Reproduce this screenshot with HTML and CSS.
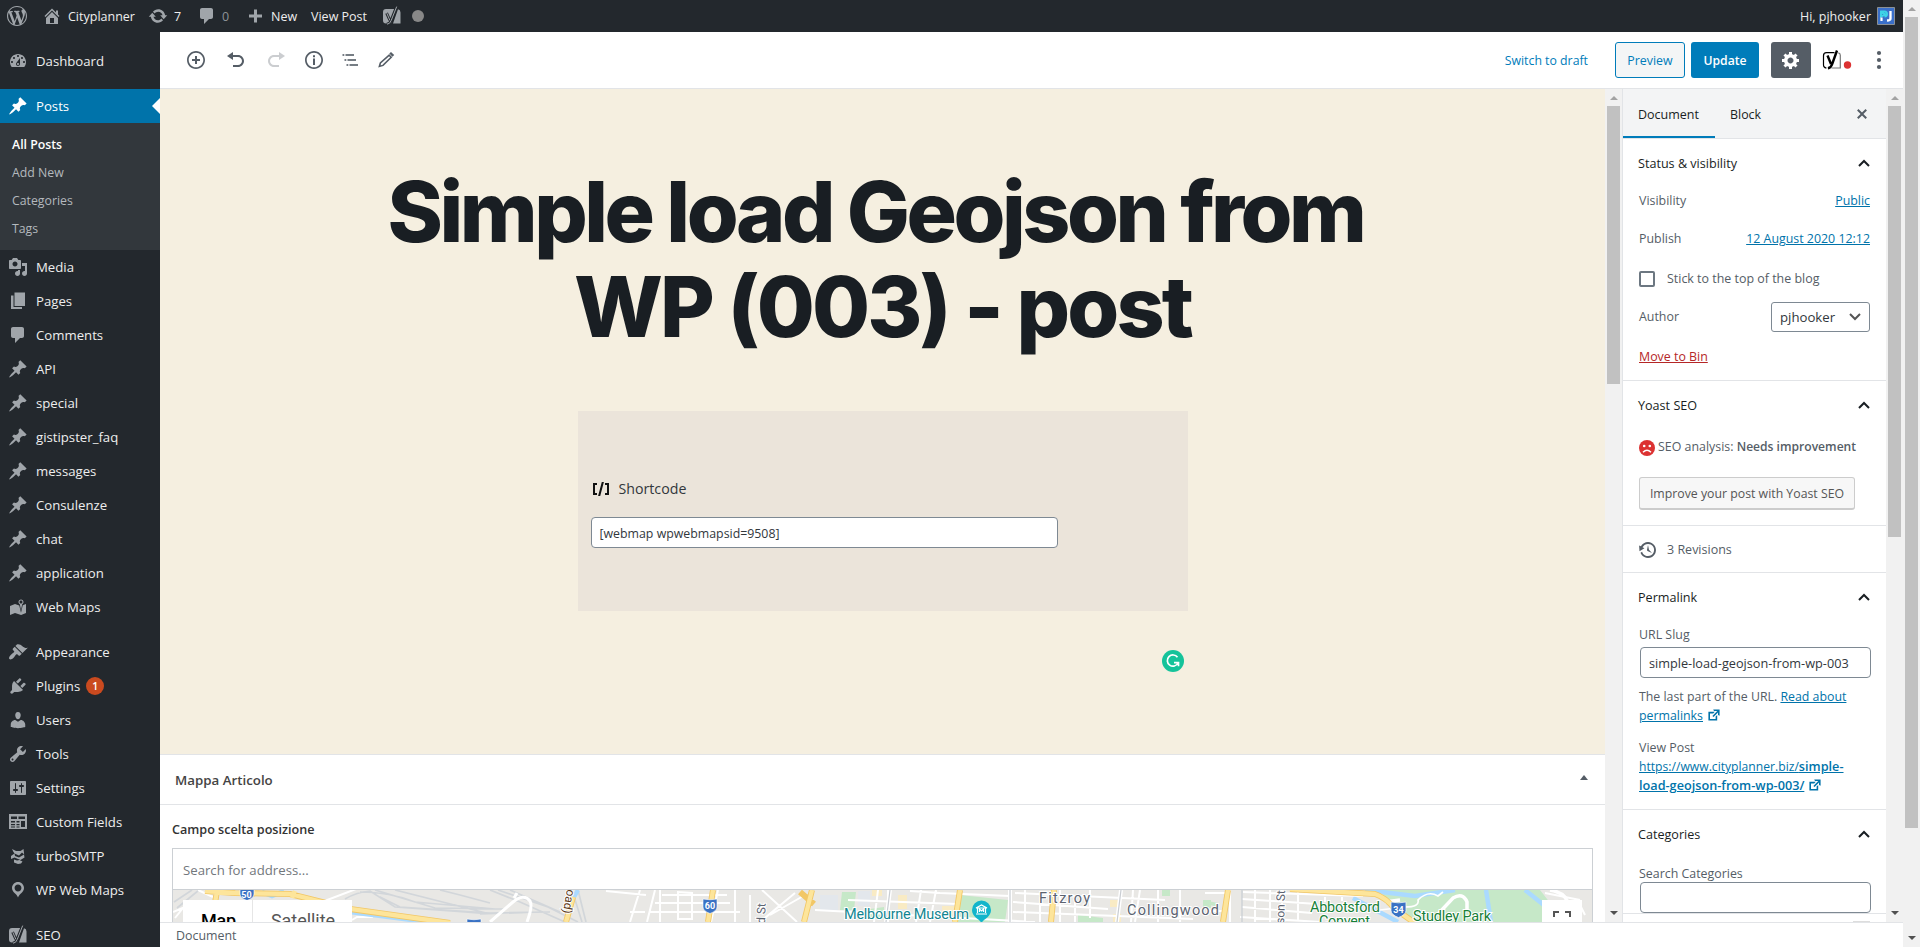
FILE: index.html
```html
<!DOCTYPE html>
<html lang="en">
<head>
<meta charset="utf-8">
<title>Edit Post - Cityplanner</title>
<link rel="stylesheet" href="styles.css">
</head>
<body>
<svg class="defs" width="0" height="0" aria-hidden="true">
  <symbol id="pin" viewBox="0 0 20 20"><path d="M10.44 3.02l1.82-1.82 6.36 6.35-1.83 1.82c-1.05-.68-2.48-.57-3.41.36l-.75.75c-.92.93-1.04 2.35-.35 3.41l-1.83 1.82-2.41-2.41-2.8 2.79c-.42.42-3.38 2.71-3.8 2.29s1.86-3.39 2.28-3.81l2.79-2.79L4.1 9.36l1.83-1.82c1.05.69 2.48.57 3.4-.36l.75-.75c.93-.92 1.05-2.35.36-3.41z"/></symbol>
  <symbol id="comment" viewBox="0 0 20 20"><path d="M5 2h9c1.1 0 2 .9 2 2v7c0 1.1-.9 2-2 2h-2l-5 5v-5H5c-1.1 0-2-.9-2-2V4c0-1.1.9-2 2-2z"/></symbol>
  <symbol id="up" viewBox="0 0 12 8"><path d="M1 7l5-5 5 5" fill="none" stroke="#191e23" stroke-width="2"/></symbol>
  <symbol id="external" viewBox="0 0 20 20"><path d="M9 3h8v8l-2-1V6.92l-5.6 5.59-1.41-1.41L14.08 5H10zm3 12v-3l2-2v7H3V6h8L9 8H5v7h7z"/></symbol>
  <symbol id="yoast" viewBox="0 0 20 20"><path d="M4 3h9.5L9 17.500H4a3 3 0 0 1-3-3V6a3 3 0 0 1 3-3zM16 3.200q2.500.6 2.500 3.300v11H11z"/><path d="M4.600 7.200l3.200 7M14.600.6L9 14.500q-1.200 3.600-4.300 3.700" fill="none" stroke="#23282d" stroke-width="2.800"/><path d="M4.800 7.200l3 7M14.700.6L9.200 14.500q-1.300 3.600-4.200 3.700" fill="none" stroke="currentColor" stroke-width="1"/></symbol>
  <symbol id="shield" viewBox="0 0 16 16"><path d="M1 1q7 1.500 14 0v8q0 4-7 6.500Q1 13 1 9z" fill="#3a72c4" stroke="#fff" stroke-width=".6"/></symbol>
</svg>

<div class="screen">
  <div class="page">
    <header class="adminbar">
      <svg class="ic wp" viewBox="0 0 20 20"><path d="M20 10c0-5.510-4.490-10-10-10C4.480 0 0 4.490 0 10c0 5.520 4.480 10 10 10 5.510 0 10-4.480 10-10zM7.780 15.370L4.370 6.220c.55-.02 1.170-.08 1.170-.08.5-.06.44-1.130-.06-1.110 0 0-1.450.11-2.370.11-.18 0-.37 0-.58-.01C4.120 2.690 6.870 1.110 10 1.110c2.330 0 4.450.87 6.050 2.340-.68-.11-1.650.39-1.650 1.580 0 .74.45 1.360.9 2.100.35.61.55 1.360.55 2.460 0 1.490-1.400 5-1.400 5l-3.030-8.370c.54-.02.82-.17.82-.17.5-.05.44-1.250-.06-1.220 0 0-1.440.12-2.380.12-.87 0-2.330-.12-2.330-.12-.5-.03-.56 1.200-.06 1.220l.92.08 1.260 3.410zM17.410 10c.24-.64.74-1.870.43-4.250.7 1.290 1.050 2.710 1.050 4.250 0 3.290-1.730 6.240-4.400 7.780.97-2.590 1.940-5.200 2.920-7.780zM6.100 18.090C3.120 16.650 1.110 13.530 1.110 10c0-1.300.23-2.480.72-3.590C3.250 10.300 4.670 14.200 6.100 18.090zm4.030-6.630l2.580 6.980c-.86.29-1.760.45-2.710.45-.79 0-1.570-.11-2.290-.33.81-2.380 1.620-4.740 2.420-7.100z"/></svg>
      <div class="bar-item city"><svg class="ic" viewBox="0 0 20 20"><path fill-rule="evenodd" d="M16 8.500l1.530 1.530-1.060 1.060L10 4.600l-6.470 6.490-1.060-1.060L10 2.500l4 4v-2h2v4zm-6-2.460l6 5.990V18H4v-5.970zM12 17v-5H8v5h4z"/></svg><span>Cityplanner</span></div>
      <div class="bar-item upd"><svg class="ic" viewBox="0 0 20 20"><path d="M10.200 3.280c3.530 0 6.430 2.610 6.920 6h2.080l-3.500 4-3.500-4h2.320c-.45-1.970-2.210-3.450-4.320-3.450-1.450 0-2.730.71-3.540 1.780L4.950 5.660C6.230 4.200 8.110 3.280 10.200 3.280zm-.4 13.440c-3.520 0-6.430-2.610-6.920-6H.8l3.500-4c1.170 1.330 2.330 2.670 3.500 4H5.480c.45 1.970 2.210 3.450 4.320 3.450 1.450 0 2.730-.71 3.540-1.780l1.710 1.950c-1.280 1.460-3.150 2.380-5.250 2.380z"/></svg><span>7</span></div>
      <div class="bar-item com"><svg class="ic"><use href="#comment"/></svg><span class="dim">0</span></div>
      <div class="bar-item new"><svg class="ic" viewBox="0 0 20 20"><path d="M17 8.500v3h-5v5H9v-5H4v-3h5v-5h3v5z"/></svg><span>New</span></div>
      <div class="bar-item view"><span>View Post</span></div>
      <svg class="ic seo"><use href="#yoast"/></svg>
      <i class="score"></i>
      <div class="bar-item me"><span>Hi, pjhooker</span><svg class="avatar" viewBox="0 0 18 18"><path d="M.5.5h17v17H.5z" fill="#3a6fc9" stroke="#8a9096"/><path d="M4 5l4.500 2.500L4 9.500zM4 4.500h3.500a2.500 2.500 0 0 1 0 5" fill="none" stroke="#3dd3e6" stroke-width="2"/><path d="M4.500 10.500V14" stroke="#fff" stroke-width="2.200"/><path d="M13.500 4v7.500q0 2-3.500 2" fill="none" stroke="#fff" stroke-width="2.300"/></svg></div>
    </header>

    <div class="below">
      <nav class="menu">
        <a class="mi"><svg viewBox="0 0 20 20"><path fill-rule="evenodd" d="M3.760 16h12.480c1.100-1.370 1.760-3.110 1.760-5 0-4.420-3.580-8-8-8s-8 3.580-8 8c0 1.890.66 3.630 1.760 5zM10 4c.55 0 1 .45 1 1s-.45 1-1 1-1-.45-1-1 .45-1 1-1zM6 6c.55 0 1 .45 1 1s-.45 1-1 1-1-.45-1-1 .45-1 1-1zm8 0c.55 0 1 .45 1 1s-.45 1-1 1-1-.45-1-1 .45-1 1-1zm-5.370 5.550L12 7v6c0 1.100-.9 2-2 2s-2-.9-2-2c0-.57.24-1.080.63-1.450zM4 10c.55 0 1 .45 1 1s-.45 1-1 1-1-.45-1-1 .45-1 1-1zm12 0c.55 0 1 .45 1 1s-.45 1-1 1-1-.45-1-1 .45-1 1-1zm-5 3c0-.55-.45-1-1-1s-1 .45-1 1 .45 1 1 1 1-.45 1-1z"/></svg><span>Dashboard</span></a>
        <div class="sep"></div>
        <a class="mi active"><svg><use href="#pin"/></svg><span>Posts</span></a>
        <div class="submenu"><a class="cur">All Posts</a><a>Add New</a><a>Categories</a><a>Tags</a></div>
        <a class="mi"><svg viewBox="0 0 20 20"><path fill-rule="evenodd" d="M13 11V4c0-.55-.45-1-1-1h-1.670L9 1H5L3.670 3H2c-.55 0-1 .45-1 1v7c0 .55.45 1 1 1h10c.55 0 1-.45 1-1zM7 4.500c1.380 0 2.500 1.120 2.500 2.500S8.380 9.500 7 9.500 4.500 8.380 4.500 7 5.620 4.500 7 4.500zM14 6h5v10.500c0 1.380-1.120 2.500-2.500 2.500S14 17.880 14 16.500s1.120-2.500 2.500-2.500c.17 0 .34.02.5.05V9h-3V6zm-4 8.050V13h2v3.500c0 1.380-1.120 2.500-2.500 2.500S7 17.880 7 16.500 8.120 14 9.500 14c.17 0 .34.02.5.05z"/></svg><span>Media</span></a>
        <a class="mi"><svg viewBox="0 0 20 20"><path d="M6.500 15V1.500H17V15zM5.500 16H14v2H3V4.500h2.500z"/></svg><span>Pages</span></a>
        <a class="mi"><svg><use href="#comment"/></svg><span>Comments</span></a>
        <a class="mi"><svg><use href="#pin"/></svg><span>API</span></a>
        <a class="mi"><svg><use href="#pin"/></svg><span>special</span></a>
        <a class="mi"><svg><use href="#pin"/></svg><span>gistipster_faq</span></a>
        <a class="mi"><svg><use href="#pin"/></svg><span>messages</span></a>
        <a class="mi"><svg><use href="#pin"/></svg><span>Consulenze</span></a>
        <a class="mi"><svg><use href="#pin"/></svg><span>chat</span></a>
        <a class="mi"><svg><use href="#pin"/></svg><span>application</span></a>
        <a class="mi"><svg viewBox="0 0 20 20"><path fill-rule="evenodd" d="M13 13.140l1.170-5.940c.79-.43 1.330-1.250 1.330-2.200 0-1.380-1.120-2.500-2.500-2.500S10.500 3.620 10.500 5c0 .95.54 1.770 1.330 2.200zm0-9.640c.83 0 1.500.67 1.500 1.500s-.67 1.500-1.500 1.500-1.500-.67-1.500-1.500.67-1.500 1.500-1.500zm1.720 4.800L18 6.970v9L13.120 18 7 15.970l-5 2v-9l5-2 4.270 1.410 1.730 7.300z"/></svg><span>Web Maps</span></a>
        <div class="sep"></div>
        <a class="mi"><svg viewBox="0 0 20 20"><path d="M14.480 11.060L7.410 3.990l1.500-1.500c.5-.56 2.300-.47 3.510.32 1.210.8 1.430 1.280 2.910 2.100 1.180.64 2.450 1.260 4.450.85zm-.71.71L6.700 4.700 4.930 6.470c-.39.39-.39 1.020 0 1.410l1.060 1.060c.39.39.39 1.030 0 1.420-.6.6-1.430 1.110-2.210 1.690-.35.26-.7.53-1.010.84C1.430 14.230.4 16.080 1.400 17.070c.99 1 2.840-.03 4.180-1.360.31-.31.58-.66.85-1.020.57-.78 1.080-1.610 1.690-2.210.39-.39 1.020-.39 1.410 0l1.060 1.060c.39.39 1.020.39 1.410 0z"/></svg><span>Appearance</span></a>
        <a class="mi"><svg viewBox="0 0 20 20"><path d="M13.110 4.360L9.870 7.600 8 5.730l3.240-3.240c.35-.34 1.050-.2 1.560.32.52.51.66 1.210.31 1.550zm-8 1.770l.91-1.120 9.010 9.010-1.190.84c-.71.71-2.630 1.160-3.820 1.160H6.140L4.900 17.260c-.59.59-1.540.59-2.120 0-.59-.58-.59-1.530 0-2.120l1.240-1.240v-3.880c0-1.130.4-3.190 1.090-3.890zm7.260 3.970l3.240-3.240c.34-.35 1.040-.21 1.550.31.52.51.66 1.210.31 1.550l-3.240 3.250z"/></svg><span>Plugins</span><b class="count">1</b></a>
        <a class="mi"><svg viewBox="0 0 20 20"><path d="M10 9.250c-2.270 0-2.730-3.440-2.730-3.440C7 4.020 7.820 2 9.970 2c2.160 0 2.980 2.020 2.710 3.810 0 0-.41 3.440-2.680 3.440zm0 2.570L12.720 10c2.390 0 4.520 2.330 4.520 4.530v2.490s-3.650 1.130-7.240 1.130c-3.650 0-7.240-1.130-7.240-1.130v-2.490c0-2.250 1.940-4.480 4.470-4.480z"/></svg><span>Users</span></a>
        <a class="mi"><svg viewBox="0 0 20 20"><path fill-rule="evenodd" d="M16.680 9.770c-1.340 1.340-3.300 1.670-4.950.99l-5.410 6.520c-.99.99-2.590.99-3.580 0s-.99-2.590 0-3.570l6.520-5.420c-.68-1.650-.35-3.610.99-4.950 1.280-1.280 3.120-1.620 4.720-1.060l-2.890 2.890 2.820 2.820 2.860-2.870c.53 1.580.18 3.390-1.080 4.650zM3.810 16.210c.4.39 1.040.39 1.430 0 .4-.4.4-1.040 0-1.430-.39-.4-1.030-.4-1.430 0-.39.39-.39 1.030 0 1.430z"/></svg><span>Tools</span></a>
        <a class="mi"><svg viewBox="0 0 20 20"><path fill-rule="evenodd" d="M18 16V4c0-.55-.45-1-1-1H3c-.55 0-1 .45-1 1v12c0 .55.45 1 1 1h14c.55 0 1-.45 1-1zM8 11h1c.55 0 1 .45 1 1s-.45 1-1 1H8v1.500c0 .28-.22.5-.5.5s-.5-.22-.5-.5V13H6c-.55 0-1-.45-1-1s.45-1 1-1h1V5.500c0-.28.22-.5.5-.5s.5.22.5.5V11zm5-2h-1c-.55 0-1-.45-1-1s.45-1 1-1h1V5.500c0-.28.22-.5.5-.5s.5.22.5.5V7h1c.55 0 1 .45 1 1s-.45 1-1 1h-1v5.500c0 .28-.22.5-.5.5s-.5-.22-.5-.5V9z"/></svg><span>Settings</span></a>
        <a class="mi"><svg viewBox="0 0 20 20"><path fill-rule="evenodd" d="M1 2h18v15H1zM3 4.500v2.500h6V4.500zM10.500 4.500V7H17V4.500zM3 9v1.500h4V9zM8.500 9v1.500h3V9zM13 9v6h4V9zM3 12v1.200h4V12zM8.500 12v1.200h3V12zM3 14.500v1h4v-1zM8.500 14.500v1h3v-1z"/></svg><span>Custom Fields</span></a>
        <a class="mi"><svg viewBox="0 0 20 20"><path d="M4 3l4 2h4.500l3-2 .7 5.500-2.200-2L11 9.500 6.500 7.500 5.500 6zM3 10l3.500-2.500.5 2.500 4 1.500 5-3 .5 3-4 2.500-6-2.500L3 13zM6 13.500l3 1 2.500-.5 3 1.500-1.500 2-3 .5L6 16.500z"/></svg><span>turboSMTP</span></a>
        <a class="mi"><svg viewBox="0 0 20 20"><path fill-rule="evenodd" d="M10 2C6.690 2 4 4.690 4 8c0 2.020 1.170 3.710 2.530 4.890.43.37 1.180.96 1.850 1.830.74.97 1.410 2.010 1.620 2.710.21-.7.88-1.740 1.620-2.710.67-.87 1.420-1.460 1.850-1.830C14.830 11.710 16 10.020 16 8c0-3.310-2.690-6-6-6zm0 2.560c1.900 0 3.440 1.540 3.440 3.440S11.900 11.440 10 11.440 6.560 9.900 6.560 8 8.100 4.560 10 4.560z"/></svg><span>WP Web Maps</span></a>
        <div class="sep"></div>
        <a class="mi"><svg><use href="#yoast"/></svg><span>SEO</span></a>
      </nav>

      <div class="editor">
        <div class="toolbar">
          <div class="tools">
            <svg viewBox="0 0 20 20"><path fill-rule="evenodd" d="M10 1c-5 0-9 4-9 9s4 9 9 9 9-4 9-9-4-9-9-9zm0 16.300c-4 0-7.300-3.300-7.300-7.300S6 2.700 10 2.700s7.300 3.300 7.300 7.300-3.300 7.300-7.300 7.300zM11 6H9v3H6v2h3v3h2v-3h3V9h-3z"/></svg>
            <svg viewBox="0 0 20 20"><path d="M12 5H7V2L1 6l6 4V7h5c2.200 0 4 1.800 4 4s-1.800 4-4 4H7v2h5c3.300 0 6-2.700 6-6s-2.700-6-6-6z"/></svg>
            <svg class="off" viewBox="0 0 20 20"><path d="M8 5h5V2l6 4-6 4V7H8c-2.200 0-4 1.800-4 4s1.800 4 4 4h5v2H8c-3.300 0-6-2.700-6-6s2.700-6 6-6z"/></svg>
            <svg viewBox="0 0 20 20"><path fill-rule="evenodd" d="M10 1c-5 0-9 4-9 9s4 9 9 9 9-4 9-9-4-9-9-9zm0 16.300c-4 0-7.300-3.300-7.300-7.300S6 2.700 10 2.700s7.300 3.300 7.300 7.300-3.300 7.300-7.300 7.300zM9 5.200h2v2H9zM9 8.500h2V15H9z"/></svg>
            <svg class="soft" viewBox="0 0 20 20"><path d="M2.500 4h1.800v2H2.500zM5.500 4H14v2H5.500zM4.500 9h1.800v2H4.500zM7.500 9H16v2H7.500zM6.500 14h1.800v2H6.500zM9.500 14H18v2H9.500z"/></svg>
            <svg viewBox="0 0 20 20"><path d="M13.200 5.200l2 2L7 15.400l-3.600 1 1-3.400z" fill="none" stroke="#555d66" stroke-width="1.600"/><path d="M13.300 3.600L15 2l3.200 3.100-1.800 1.700z"/></svg>
          </div>
          <a class="draft">Switch to draft</a>
          <a class="btn preview">Preview</a>
          <a class="btn update">Update</a>
          <span class="gear"><svg viewBox="0 0 20 20"><path fill-rule="evenodd" d="M18 12h-2.180c-.17.7-.44 1.350-.81 1.930l1.540 1.540-2.100 2.100-1.540-1.540c-.58.36-1.230.63-1.910.79V19H8v-2.180c-.68-.16-1.330-.43-1.910-.79l-1.540 1.540-2.120-2.120 1.540-1.540c-.36-.58-.63-1.230-.79-1.910H1V9.030h2.170c.16-.7.44-1.350.8-1.940L2.430 5.550l2.100-2.100 1.540 1.540c.58-.37 1.240-.64 1.930-.81V2h3v2.180c.68.16 1.330.43 1.910.79l1.540-1.540 2.120 2.120-1.540 1.540c.36.59.64 1.240.8 1.940H18V12zm-8.500 1.500c1.660 0 3-1.340 3-3s-1.340-3-3-3-3 1.340-3 3 1.340 3 3 3z"/></svg></span>
          <svg class="yo" viewBox="0 0 30 20"><path d="M12.500 2.700H4.500a3 3 0 0 0-3 3v9a3 3 0 0 0 3 3.300" fill="none" stroke="#000" stroke-width="1.200"/><path d="M9.500 18h8.800V5.200q0-2-2-2.400" fill="none" stroke="#777" stroke-width="1.200"/><path d="M5.500 5.500l3.500 8.500M15 .5L10.200 14q-1.300 4-4.300 4.300" fill="none" stroke="#000" stroke-width="2.400"/><circle cx="25.500" cy="15" r="3.700" fill="#dc3232"/></svg>
          <svg class="more" viewBox="0 0 6 20"><circle cx="3" cy="3" r="2.100"/><circle cx="3" cy="10" r="2.100"/><circle cx="3" cy="17" r="2.100"/></svg>
        </div>

        <div class="work">
          <main class="main">
            <section class="canvas">
              <h1 class="title"><span class="l1">Simple load Geojson from</span><span class="l2">WP (003) - post</span></h1>
              <div class="block">
                <div class="label"><svg viewBox="0 0 20 20"><path d="M6 14H4V6h2V4H2v12h4zM7.100 17h2.100l3.700-14h-2.100zM14 4v2h2v8h-2v2h4V4z"/></svg>Shortcode</div>
                <div class="code">[webmap wpwebmapsid=9508]</div>
              </div>
              <svg class="gram" viewBox="0 0 22 22"><circle cx="11" cy="11" r="11" fill="#15c39a"/><path d="M15.500 7.300A5.600 5.600 0 1 0 16 13M12 12.600h4.500v3.700" fill="none" stroke="#fff" stroke-width="1.700"/></svg>
            </section>
            <section class="metabox">
              <div class="mb-head"><span>Mappa Articolo</span><i class="tri"></i></div>
              <div class="mb-label">Campo scelta posizione</div>
              <div class="mapfield">
                <div class="search">Search for address...</div>
                <svg class="map" viewBox="173 890 1419 32">
                  <rect x="173" y="890" width="1419" height="32" fill="#e9e8e5"/>
                  <path d="M842 892h14l-2 18h-14zM960 895l48 5-3 22h-50zM1162 890h8v6h-8zM1203 900l15 3v4l-15-4zM870 909l14-2v12h-14zM1078 915l25 3v4h-25zM1203 900h8v8h-8zM1380 890h160l25 32h-150l-26-18z" fill="#c6e8c8"/>
                  <path d="M820 895h18v15h-18zM858 891h12v15h-12z" fill="#e3e7ec"/>
                  <path d="M1110 900h10v7h-10zM898 895h9v14h-9zM942 906h12v10h-12zM1113 914h8v8h-8zM872 890h10v6h-10z" fill="#f9ebc4"/>
                  <g fill="none" stroke="#d2d6da" stroke-width="1.700"><path d="M345 899q12-7 25-8l25 16 70 5 25 2M360 892q30 0 55 10l80 7M375 890l60 18 70 1M380 897l20 10 90 6 60-1M395 890l95 24M440 890l20 5 30 8M490 890l30 12 45 20M498 890l50 17 30 15M510 890l50 22M572 890l10 32M578 890l8 32M174 902l18-12M177 908l22-18M480 914l60-2"/></g>
                  <path d="M262 892l10 4 12-5M578 890l-4 7M1365 890l50 6 40-6M1353 898l45 24M1486 890l5 32M1525 890l30 24" stroke="#aadaff" stroke-width="4.500" fill="none"/>
                  <g fill="none" stroke="#fff" stroke-width="2"><path d="M198 890l15 7M173 912l12-5M175 918l8-10 12 2M322 902l34-13M352 920l5-3h15v-5M640 890l-10 32M655 890l-8 32M606 891l40 4M662 895h65M655 903h75M650 912h90M630 912h15M678 892v27h14v-26zM660 890v32M718 890l-7 32M735 890v32M750 895v27M762 890l35 32M795 893l-35 29M770 915l35-20M878 890l-4 32M888 890v32M815 910l220 12M848 900l110 4M936 890l-6 32M921 890l-5 32M910 891l30 2 70 3M1015 893l150 7M1013 902l95 7M1013 912l180 7M1025 890v32M1040 897v25M1060 890v32M1075 897v25M1090 890v28M1133 890l-2 32M1140 890l-5 32M1158 890v32M1180 890v32M1230 890v32M1243 892l120 4M1242 899l75 5M1242 907l70 6M1240 917l80 5M1255 890v32M1270 890v32M1282 890v32M1298 890v32M1325 897v5M1342 895v6M1205 893h20M1210 911h15M1545 893l35 7M1580 905l5 10"/><path d="M490 922l23-20q11-9 17-1 3 5-3 21M517 893l-3 5" stroke-width="3"/><path d="M1438 914l15-16q10-6 14 4v8M1550 890q17 3 18 15M1400 900l-15 2" stroke-width="3.500"/><path d="M1380 910l25-3q15 0 13-7 10-10 20-4l5-4" stroke-width="1.700"/></g>
                  <path d="M1010 890v32M1121 890l-4 32M890 890l-4 32" stroke="#fff" stroke-width="4"/><path d="M1010 890v32M1121 890l-4 32M890 890l-4 32M1242 890v32" stroke="#c9cdd2" stroke-width="1.200"/>
                  <path d="M352 912l100 13" stroke="#aadaff" stroke-width="5" fill="none"/>
                  <g fill="none" stroke="#f2c766" stroke-width="6"><path d="M205 891l30 2 55 1 60 15 100 14M566 922l7-25M713 890l-5 32M812 890l-8 32M800 892l14 12M960 890l-5 32M1054 890l-3 32M1228 890l-5 32M1290 889l85 5q10 3 20 15l20 14M217 891l-2 12"/></g>
                  <g fill="none" stroke="#fde59b" stroke-width="4.300"><path d="M205 891l30 2 55 1 60 15 100 14M566 922l7-25M713 890l-5 32M812 890l-8 32M960 890l-5 32M1054 890l-3 32M1228 890l-5 32M1290 889l85 5q10 3 20 15l20 14M217 891l-2 12M292 898l3-7"/></g>
                  <use href="#shield" x="239" y="885" width="16" height="16"/><use href="#shield" x="702" y="898" width="16" height="16"/><use href="#shield" x="466" y="918" width="16" height="16"/><use href="#shield" x="1390" y="901" width="17" height="17"/>
                  <g class="num"><text x="246.500" y="897.500">50</text><text x="710" y="908.500">60</text><text x="1398.500" y="912.500">34</text></g>
                  <g class="poi" font-size="14.500"><text x="844" y="919" textLength="125" fill="#128591">Melbourne Museum</text><text x="1310" y="912" textLength="70" fill="#188038">Abbotsford</text><text x="1319" y="926" textLength="51" fill="#188038">Convent</text><text x="1413" y="921" textLength="78" fill="#188038">Studley Park</text><text x="1039" y="903" textLength="51" fill="#5b6370">Fitzroy</text><text x="1127" y="915" textLength="92" fill="#5b6370">Collingwood</text></g>
                  <g class="poi street"><text transform="translate(1284 924) rotate(-88)" fill="#5b6370">son St</text><text transform="translate(765 924) rotate(-88)" fill="#5b6370">d St</text><text transform="translate(567 889) rotate(100)" fill="#5d3a1a" font-size="12">oad)</text></g>
                  <path d="M981.500 923c-2-4-9.500-6-9.500-13a9.500 9.500 0 0 1 19 0c0 7-7.500 9-9.500 13z" fill="#12b5cb"/><path d="M976 914h11M977.500 913v-5h8v5M976 908l5.500-3 5.500 3zM979.500 912v-3l2 2 2-2v3" fill="none" stroke="#fff" stroke-width="1.200"/>
                  <g fill="#fff"><path d="M183 900h169v22H183zM1542 900h40v22h-40z"/></g><path d="M252.500 900v22" stroke="#e6e6e6"/>
                  <g class="ctl"><text x="201" y="926.500" textLength="35" fill="#000" font-weight="500">Map</text><text x="271" y="926.500" textLength="64" fill="#565656">Satellite</text></g>
                  <path d="M1554 917v-5h5M1565 912h5v5" fill="none" stroke="#555" stroke-width="2"/>
                </svg>
              </div>
            </section>
          </main>
          <div class="scroll s-main"><i class="arr top"></i><i class="thumb"></i><i class="arr bot"></i></div>

          <aside class="settings">
            <div class="tabs"><a class="tab on">Document</a><a class="tab">Block</a><svg class="x" viewBox="0 0 20 20"><path d="M14.950 6.460L11.410 10l3.540 3.540-1.410 1.410L10 11.420l-3.530 3.530-1.420-1.420L8.580 10 5.050 6.470l1.420-1.420L10 8.580l3.540-3.530z"/></svg></div>
            <section class="panel p-status">
              <h2>Status &amp; visibility<svg><use href="#up"/></svg></h2>
              <div class="row r1"><span>Visibility</span><a>Public</a></div>
              <div class="row r2"><span>Publish</span><a>12 August 2020 12:12</a></div>
              <div class="row r3"><i class="check"></i><span>Stick to the top of the blog</span></div>
              <div class="row r4"><span>Author</span><div class="select">pjhooker<svg viewBox="0 0 12 8"><path d="M1 1l5 5 5-5" fill="none" stroke="#555" stroke-width="2"/></svg></div></div>
              <div class="row r5"><a class="bin">Move to Bin</a></div>
            </section>
            <section class="panel p-yoast">
              <h2>Yoast SEO<svg><use href="#up"/></svg></h2>
              <div class="analysis"><svg viewBox="0 0 16 16"><circle cx="8" cy="8" r="8" fill="#dc3232"/><circle cx="5.200" cy="6" r="1.300" fill="#fff"/><circle cx="10.800" cy="6" r="1.300" fill="#fff"/><path d="M4 12.300q4-4 8 0" fill="none" stroke="#fff" stroke-width="1.400"/></svg><span>SEO analysis: <b>Needs improvement</b></span></div>
              <div class="improve">Improve your post with Yoast SEO</div>
            </section>
            <section class="panel p-rev"><svg viewBox="0 0 20 20"><path fill-rule="evenodd" d="M13.650 2.880c3.930 2.010 5.480 6.840 3.470 10.770s-6.830 5.480-10.770 3.470c-1.870-.96-3.200-2.560-3.860-4.400l1.640-1.030c.45 1.570 1.520 2.950 3.080 3.760 3.010 1.540 6.690.35 8.230-2.660 1.550-3.010.36-6.690-2.650-8.240C9.780 3.010 6.100 4.200 4.560 7.210l1.880.97-4.950 3.080-.39-5.820 1.780.91C4.900 2.400 9.750.89 13.650 2.880zm-4.360 7.830C9.110 10.530 9 10.280 9 10c0-.07.03-.12.04-.19h-.01L10 5l.97 4.810L14 13l-4.500-2.120.02-.02c-.08-.04-.16-.09-.23-.15z"/></svg><span>3 Revisions</span></section>
            <section class="panel p-link">
              <h2>Permalink<svg><use href="#up"/></svg></h2>
              <div class="lbl">URL Slug</div>
              <div class="input slug">simple-load-geojson-from-wp-003</div>
              <div class="help">The last part of the URL. <a>Read about<br>permalinks</a><svg class="ext"><use href="#external"/></svg></div>
              <div class="viewpost">View Post<br><a><span class="host">https://www.cityplanner.biz/</span><b>simple-</b></a><br><a><b>load-geojson-from-wp-003/</b></a><svg class="ext"><use href="#external"/></svg></div>
            </section>
            <section class="panel p-cat">
              <h2>Categories<svg><use href="#up"/></svg></h2>
              <div class="lbl">Search Categories</div>
              <div class="input"></div>
              <i class="peek"></i>
            </section>
          </aside>
          <div class="scroll s-side"><i class="arr top"></i><i class="thumb"></i><i class="arr bot"></i></div>
        </div>
        <footer class="crumb">Document</footer>
      </div>
    </div>
  </div>
  <div class="scroll s-page"><i class="arr top"></i><i class="thumb"></i><i class="arr bot"></i></div>
</div>
</body>
</html>
```
FILE: styles.css
```css
* { box-sizing: border-box; }
body { margin: 0; overflow: hidden; font: 12.4px/18px "Open Sans", "Noto Sans", sans-serif; color: #555d66; }
.defs { position: absolute; }
svg { flex: none; fill: currentColor; }
.screen { display: flex; width: 1920px; height: 947px; overflow: hidden; }
.page { width: 1903px; display: flex; flex-direction: column; }

.adminbar { height: 32px; flex: none; display: flex; align-items: center; background: #23282d; color: #eee; padding: 0 7px; }
.ic { width: 20px; height: 20px; color: #a0a5aa; }
.bar-item { display: flex; align-items: center; height: 32px; font-size: 12.5px; white-space: nowrap; }
.bar-item span { padding-top: 1px; }
.bar-item .ic { margin-right: 6px; }
.city { margin-left: 15px; width: 106px; }
.upd { width: 49px; }
.com { width: 48px; }
.com .ic { margin-right: 5px; }
.new { width: 66px; }
.view { width: 72px; }
.dim { color: #8d9297; }
.seo { margin-left: -1px; }
.score { width: 12px; height: 12px; border-radius: 50%; background: #888; margin-left: 10px; }
.me { margin-left: auto; gap: 6px; }
.avatar { width: 18px; height: 18px; margin-right: 1px; }

.below { flex: 1; min-height: 0; display: flex; }
.menu { width: 160px; flex: none; background: #23282d; color: #eee; padding-top: 12px; overflow: hidden; }
.mi { display: flex; align-items: center; height: 34px; padding-left: 8px; font-size: 13.2px; position: relative; }
.mi svg { width: 20px; height: 20px; margin-right: 8px; color: #a0a5aa; }
.active { background: #0073aa; color: #fff; }
.mi.active svg { color: #fff; }
.active::after { content: ""; position: absolute; right: 0; top: 9px; border: 8px solid transparent; border-right-color: #fff; border-left: 0; }
.sep { height: 11px; }
.submenu { height: 127px; padding: 8px 12px 0; background: #32373c; display: flex; flex-direction: column; }
.submenu a { height: 28px; line-height: 28px; font-size: 12.3px; color: #b4b9be; }
.submenu .cur { color: #fff; font-weight: 600; }
.count { width: 18px; height: 18px; border-radius: 9px; background: #ca4a1f; color: #fff; font: 600 10.500px/18px "Open Sans", sans-serif; text-align: center; margin-left: 6px; }

.editor { flex: 1; min-width: 0; display: flex; flex-direction: column; background: #fff; }
.toolbar { height: 57px; flex: none; border-bottom: 1px solid #e2e4e7; display: flex; align-items: center; padding: 0 20px 0 26px; }
.tools { display: flex; flex: 1; gap: 20px; color: #555d66; }
.tools svg { width: 20px; height: 20px; }
.tools svg:nth-child(n+4) { margin-left: -2px; }
.tools svg:nth-child(n+5) { margin-left: -4px; }
.off { opacity: .3; }
.soft { opacity: .8; }
.draft { color: #007cba; margin-right: 27px; font-size: 12.3px; padding-top: 2px; }
.btn { height: 36px; border-radius: 3px; text-align: center; line-height: 37px; }
.preview { width: 70px; border: 1px solid #007cba; background: #f3f5f6; color: #007cba; margin-right: 6px; line-height: 35px; }
.update { width: 68px; background: #007cba; color: #fff; font-weight: 600; margin-right: 12px; font-size: 12.200px; line-height: 38px; }
.gear { width: 40px; height: 36px; background: #555d66; border-radius: 3px; color: #fff; display: flex; align-items: center; justify-content: center; margin-right: 11px; }
.gear svg { width: 20px; height: 20px; }
.yo { width: 30px; height: 20px; margin-right: 24px; }
.more { width: 6px; height: 20px; margin-right: 1px; }

.work { flex: 1; min-height: 0; display: flex; }
.main { width: 1445px; flex: none; overflow: hidden; }
.canvas { height: 665px; background: #f5efe0; display: flex; flex-direction: column; align-items: center; padding-top: 75px; }
.title { margin: 0; font: 800 84px/95px Inter, sans-serif; letter-spacing: -3.500px; color: #191e23; white-space: nowrap; display: flex; flex-direction: column; align-items: center; }
.l1 { padding-right: 14px; }
.l2 { letter-spacing: -2.850px; }
.block { width: 610px; height: 200px; margin-top: 57px; background: #ebe4da; padding: 66px 0 0 13px; }
.label { height: 24px; display: flex; align-items: center; gap: 8px; font-size: 14.200px; color: #32373c; }
.label svg { width: 20px; height: 20px; margin-top: -1px; color: #111; }
.code { width: 467px; height: 31px; margin-top: 16px; border: 1px solid #7e8993; border-radius: 4px; background: #fff; padding-left: 8px; line-height: 31px; color: #32373c; font-size: 12.350px; }
.gram { width: 22px; height: 22px; margin: 39px 0 0 581px; }
.metabox { border-top: 1px solid #e2e4e7; }
.mb-head { height: 50px; border-bottom: 1px solid #e2e4e7; padding: 0 17px 0 15px; display: flex; align-items: center; justify-content: space-between; color: #444; font-weight: 600; font-size: 13.300px; }
.tri { border: 4px solid transparent; border-bottom: 5px solid #555d66; border-top: 0; margin-top: -5px; }
.mb-label { padding: 16px 12px 9px; height: 43px; font-weight: 600; color: #333; font-size: 12.600px; }
.mapfield { margin: 0 12px; border: 1px solid #ccd0d4; width: 1421px; }
.search { height: 41px; line-height: 43px; padding-left: 10px; color: #72777c; border-bottom: 1px solid #ccd0d4; font-size: 13.200px; }
.map { display: block; width: 1419px; height: 32px; }
.num { font: bold 9px Roboto, sans-serif; fill: #fff; text-anchor: middle; }
.poi { font-family: Roboto, sans-serif; font-weight: 400; stroke: #fff; stroke-width: 2px; paint-order: stroke; }
.street { font-size: 12px; }
.ctl { font: 18px Roboto, sans-serif; }

.scroll { width: 17px; flex: none; background: #f1f1f1; display: flex; flex-direction: column; align-items: center; }
.arr { border: 4px solid transparent; height: 4px; }
.arr.top { border-top: 0; border-bottom-color: #a3a3a3; margin: 7px 0 6px; }
.arr.bot { border-bottom: 0; border-top-color: #505050; margin: auto 0 7px; }
.thumb { width: 13px; background: #c1c1c1; }
.s-main .thumb { height: 278px; }
.s-side .thumb { height: 431px; }
.s-page .thumb { height: 811px; }

.settings { width: 264px; flex: none; border-left: 1px solid #e2e4e7; overflow: hidden; position: relative; }
.tabs { height: 50px; background: #f3f4f5; border-bottom: 1px solid #e2e4e7; display: flex; align-items: center; color: #191e23; }
.tab { height: 49px; padding: 0 15px; line-height: 51px; }
.tab.on { width: 92px; border-bottom: 2px solid #007cba; font-weight: 500; font-size: 12.500px; }
.x { width: 20px; height: 20px; margin: 0 14px 0 auto; color: #555d66; }
.panel { border-bottom: 1px solid #e2e4e7; padding: 0 16px 0 15px; }
.panel h2 { margin: 0; height: 49px; font-size: 12.600px; font-weight: 500; color: #191e23; display: flex; align-items: center; justify-content: space-between; }
.panel h2 svg { width: 12px; height: 8px; margin-top: -2px; }
.panel a { color: #0073aa; text-decoration: underline; }
.row { display: flex; align-items: center; justify-content: space-between; margin-left: 1px; }
.p-status { height: 242px; }
.r1 { height: 26px; }
.r2 { height: 50px; }
.r3 { height: 29px; justify-content: flex-start; font-size: 12.450px; }
.check { width: 16px; height: 16px; border: 2px solid #6c7781; border-radius: 2px; margin-right: 12px; }
.r4 { height: 48px; }
.select { width: 99px; height: 30px; border: 1px solid #7e8993; border-radius: 3px; padding: 0 8px; display: flex; align-items: center; justify-content: space-between; color: #32373c; font-size: 13.200px; }
.select svg { width: 12px; height: 8px; }
.r5 { height: 31px; }
.panel .bin { color: #b52727; }
.p-yoast { height: 145px; }
.analysis { display: flex; align-items: center; height: 34px; gap: 3px; margin-left: 1px; font-size: 12.400px; white-space: nowrap; }
.analysis svg { width: 16px; height: 16px; margin-top: 2px; }
.analysis b { font-weight: 600; font-size: 12.100px; }
.improve { width: 216px; height: 33px; margin: 13px 0 0 1px; border: 1px solid #ccc; border-bottom-width: 2px; border-radius: 3px; background: #f7f7f7; line-height: 31px; text-align: center; color: #555; font-size: 12.300px; }
.p-rev { height: 47px; display: flex; align-items: center; gap: 9px; font-weight: 500; font-size: 12.500px; padding-top: 1px; }
.p-rev svg { width: 20px; height: 20px; }
.p-link { height: 237px; }
.lbl { height: 25px; line-height: 25px; margin-left: 1px; }
.input { width: 231px; height: 31px; margin-left: 2px; border: 1px solid #7e8993; border-radius: 4px; padding-left: 8px; line-height: 30px; color: #32373c; }
.slug { font-size: 12.700px; }
.help { margin: 9px 0 0 1px; line-height: 19px; height: 38px; white-space: nowrap; font-size: 12.350px; }
.ext { width: 16px; height: 16px; color: #0073aa; vertical-align: -3px; margin-left: 3px; }
.viewpost { margin: 14px 0 0 1px; line-height: 18.200px; white-space: nowrap; }
.viewpost b { font-weight: 600; font-size: 12.700px; }
.host { font-size: 12.150px; }
.p-cat .lbl { margin-top: 2px; height: 21px; }
.peek { position: absolute; right: 16px; bottom: 0; width: 17px; height: 1px; background: #ddd; }
.crumb { height: 25px; flex: none; border-top: 1px solid #e2e4e7; padding-left: 16px; line-height: 25px; }
```
